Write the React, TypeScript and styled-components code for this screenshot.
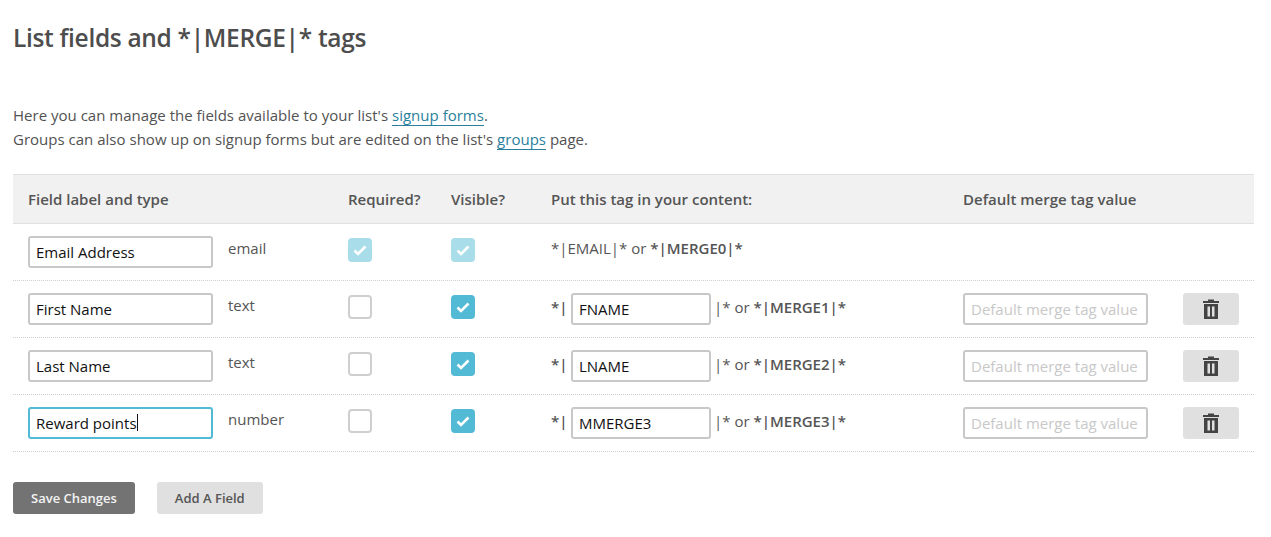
import React from "react";
import styled, { createGlobalStyle } from "styled-components";

const Global = createGlobalStyle`
  html, body { margin: 0; padding: 0; background: #fff; }
  body { font-family: "Open Sans", "Liberation Sans", sans-serif; font-size: 15px; color: #555; }
  input::placeholder { color: #c8c8c8; opacity: 1; }
`;

const Page = styled.div`
  padding: 0 17px 0 13px;
`;

const Title = styled.h1`
  margin: 0;
  padding-top: 20px;
  height: 103px;
  box-sizing: border-box;
  font-size: 24.5px;
  line-height: 36px;
  font-weight: 600;
  letter-spacing: -0.32px;
  color: #4d4d4d;
`;

const Intro = styled.p`
  margin: 0 0 23px;
  font-size: 15px;
  line-height: 24px;
  letter-spacing: 0.012px;
  color: #525252;
`;

const TextLink = styled.a`
  color: #2b7f9d;
  text-decoration: none;
  border-bottom: 1px solid #2b7f9d;
`;

const columns = "335px 103px 100px 412px 220px 1fr";

const HeadRow = styled.div`
  display: grid;
  grid-template-columns: ${columns};
  height: 50px;
  box-sizing: border-box;
  align-items: center;
  background: #f1f1f1;
  border-top: 1px solid #e0e0e0;
  border-bottom: 1px solid #e0e0e0;
`;

const HeadCell = styled.div<{ $first?: boolean }>`
  padding-left: ${(p) => (p.$first ? "15px" : "0")};
  font-size: 15px;
  font-weight: 600;
  color: #555;
`;

const Row = styled.div`
  display: grid;
  grid-template-columns: ${columns};
  height: 57px;
  box-sizing: border-box;
  padding-top: 12px;
  border-bottom: 1px dotted #d0d0d0;
`;

const LabelCell = styled.div`
  display: flex;
  padding-left: 15px;
  gap: 15px;
`;

const TypeText = styled.span`
  font-size: 15px;
  line-height: 24px;
  color: #555;
`;

const FieldWrap = styled.div`
  position: relative;
  flex: none;
`;

const Field = styled.input<{ $width: number; $focus?: boolean }>`
  display: block;
  box-sizing: border-box;
  width: ${(p) => p.$width}px;
  height: 32px;
  padding: 0 6px;
  border: 2px solid ${(p) => (p.$focus ? "#52bad5" : "#c8c8c8")};
  border-radius: 3px;
  outline: none;
  background: #fff;
  font-family: "Open Sans", "Liberation Sans", sans-serif;
  font-size: 15px;
  color: #111;
`;

const Caret = styled.span`
  position: absolute;
  left: 109px;
  top: 7px;
  width: 1px;
  height: 17px;
  background: #111;
`;

const CheckCell = styled.div`
  padding-top: 2px;
`;

const Check = styled.div<{ $on?: boolean; $dim?: boolean }>`
  box-sizing: border-box;
  width: 24px;
  height: 24px;
  border-radius: 4px;
  display: flex;
  align-items: center;
  justify-content: center;
  background: ${(p) => (p.$dim ? "#a8dde9" : p.$on ? "#52bad5" : "#fff")};
  border: ${(p) => (p.$on || p.$dim ? "none" : "2px solid #cfcfcf")};
`;

const TagCell = styled.div<{ $tall?: boolean }>`
  display: flex;
  align-items: flex-start;
  font-size: 15px;
  line-height: ${(p) => (p.$tall ? "28px" : "24px")};
  color: #555;
`;

const Pipe = styled.span`
  white-space: pre;
`;

const Bold = styled.b`
  font-weight: 600;
  white-space: pre;
`;

const TagLead = styled.b`
  font-weight: 600;
  width: 20px;
  flex: none;
`;

const TagTail = styled.span`
  margin-left: 3px;
  white-space: pre;
`;

const TrashButton = styled.button`
  width: 56px;
  height: 32px;
  padding: 0;
  border: none;
  border-radius: 3px;
  background: #e0e0e0;
  display: flex;
  align-items: center;
  justify-content: center;
`;

const Actions = styled.div`
  display: flex;
  gap: 22px;
  padding-top: 30px;
`;

const Button = styled.button<{ $primary?: boolean }>`
  height: 32px;
  border: none;
  border-radius: 3px;
  padding: 0 18px;
  font-family: "Open Sans", "Liberation Sans", sans-serif;
  font-size: 13px;
  font-weight: 600;
  background: ${(p) => (p.$primary ? "#737373" : "#e0e0e0")};
  color: ${(p) => (p.$primary ? "#f3f3f3" : "#555")};
`;

const Tick = () => (
  <svg width="24" height="24" viewBox="0 0 24 24" fill="none">
    <path d="M6.5 12.5 10 16 17.5 8.5" stroke="#fff" strokeWidth="2.6" />
  </svg>
);

const Trash = () => (
  <svg width="16" height="20" viewBox="0 0 16 20" fill="#444">
    <rect x="0" y="2" width="16" height="2" />
    <rect x="5" y="0.5" width="6" height="2" />
    <path
      d="M1 5h14v15H1zM4.5 7.5v10H7v-10zM9 7.5v10h2.5v-10z"
      fillRule="evenodd"
    />
  </svg>
);

type Item = { label: string; type: string; tag: string; merge: string; focus?: boolean };

const items: Item[] = [
  { label: "First Name", type: "text", tag: "FNAME", merge: "MERGE1" },
  { label: "Last Name", type: "text", tag: "LNAME", merge: "MERGE2" },
  { label: "Reward points", type: "number", tag: "MMERGE3", merge: "MERGE3", focus: true },
];

export default function App() {
  return (
    <Page>
      <Global />
      <Title>List fields and *|MERGE|* tags</Title>
      <Intro>
        Here you can manage the fields available to your list's <TextLink href="#">signup forms</TextLink>.
        <br />
        Groups can also show up on signup forms but are edited on the list's <TextLink href="#">groups</TextLink> page.
      </Intro>
      <HeadRow>
        <HeadCell $first>Field label and type</HeadCell>
        <HeadCell>Required?</HeadCell>
        <HeadCell>Visible?</HeadCell>
        <HeadCell>Put this tag in your content:</HeadCell>
        <HeadCell>Default merge tag value</HeadCell>
        <HeadCell />
      </HeadRow>
      <Row>
        <LabelCell>
          <Field $width={185} defaultValue="Email Address" />
          <TypeText>email</TypeText>
        </LabelCell>
        <CheckCell>
          <Check $dim><Tick /></Check>
        </CheckCell>
        <CheckCell>
          <Check $dim><Tick /></Check>
        </CheckCell>
        <TagCell>
          <Pipe>*|EMAIL|* or </Pipe>
          <Bold>*|MERGE0|*</Bold>
        </TagCell>
      </Row>
      {items.map((it) => (
        <Row key={it.merge}>
          <LabelCell>
            <FieldWrap>
              <Field $width={185} $focus={it.focus} defaultValue={it.label} />
              {it.focus && <Caret />}
            </FieldWrap>
            <TypeText>{it.type}</TypeText>
          </LabelCell>
          <CheckCell>
            <Check />
          </CheckCell>
          <CheckCell>
            <Check $on><Tick /></Check>
          </CheckCell>
          <TagCell $tall>
            <TagLead>*|</TagLead>
            <Field $width={140} defaultValue={it.tag} />
            <TagTail>|* or <Bold>*|{it.merge}|*</Bold></TagTail>
          </TagCell>
          <div>
            <Field $width={185} placeholder="Default merge tag value" />
          </div>
          <div>
            <TrashButton aria-label="Delete"><Trash /></TrashButton>
          </div>
        </Row>
      ))}
      <Actions>
        <Button $primary>Save Changes</Button>
        <Button>Add A Field</Button>
      </Actions>
    </Page>
  );
}
